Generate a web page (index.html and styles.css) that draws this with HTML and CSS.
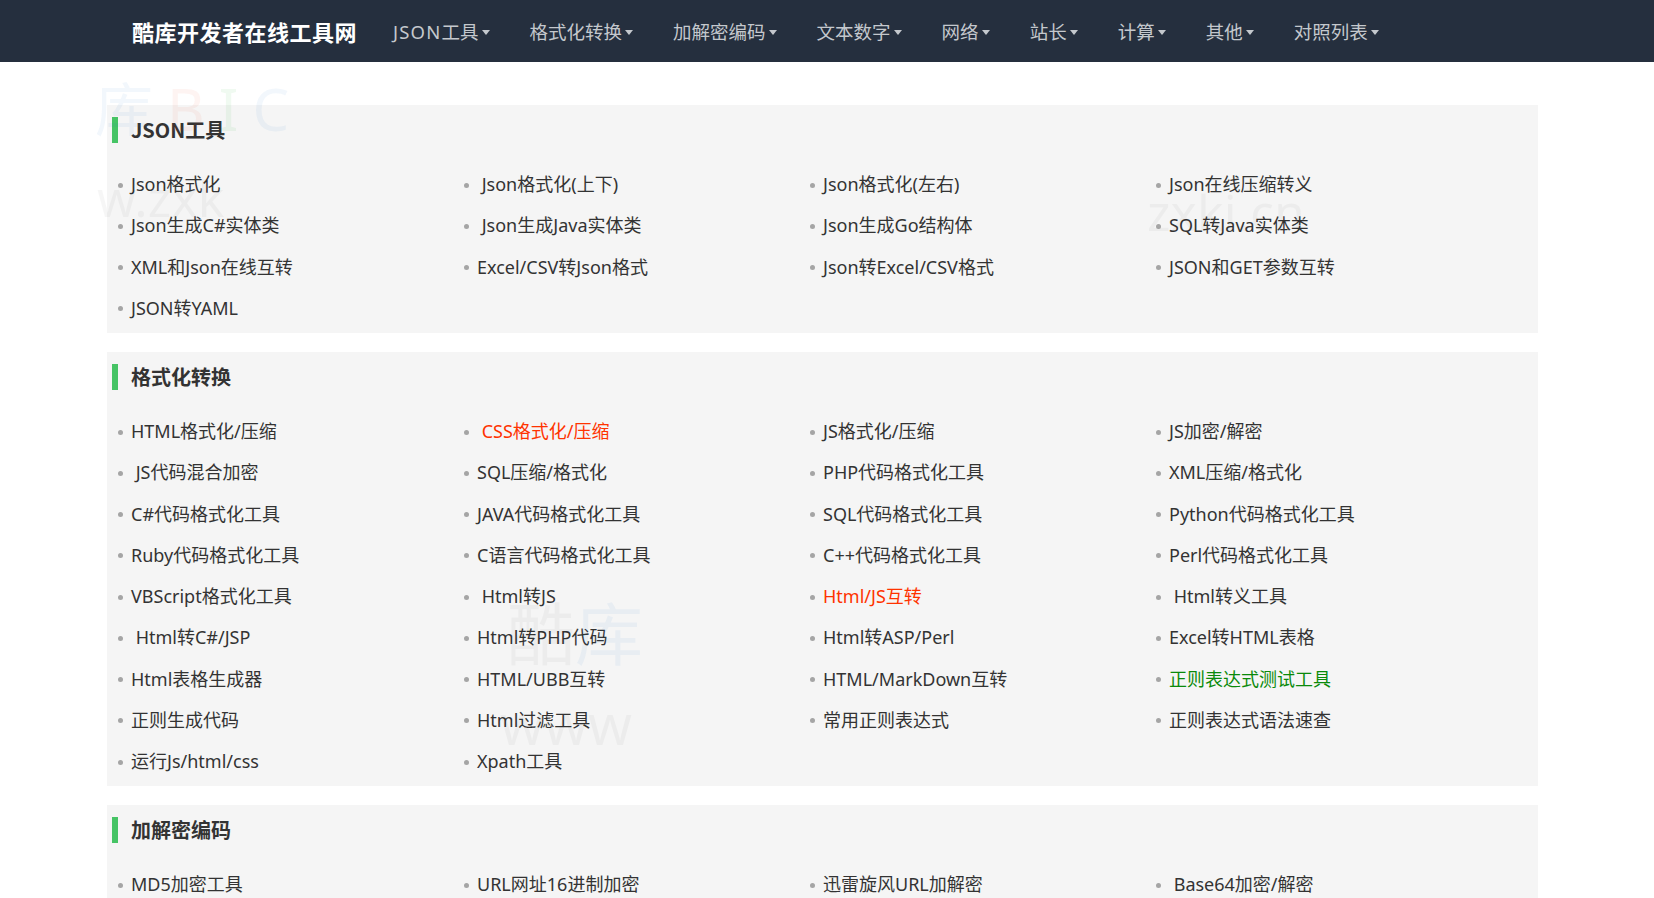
FILE: index.html
```html
<!DOCTYPE html>
<html lang="zh-CN">
<head>
<meta charset="utf-8">
<title>酷库开发者在线工具网</title>
<link rel="stylesheet" href="styles.css">
</head>
<body>
<header class="navbar">
  <div class="nav-inner">
    <a class="brand" href="#">酷库开发者在线工具网</a>
    <ul class="nav-menu">
      <li class="nav-item"><span class="latin">JSON</span>工具<span class="caret"></span></li>
      <li class="nav-item">格式化转换<span class="caret"></span></li>
      <li class="nav-item">加解密编码<span class="caret"></span></li>
      <li class="nav-item">文本数字<span class="caret"></span></li>
      <li class="nav-item">网络<span class="caret"></span></li>
      <li class="nav-item">站长<span class="caret"></span></li>
      <li class="nav-item">计算<span class="caret"></span></li>
      <li class="nav-item">其他<span class="caret"></span></li>
      <li class="nav-item">对照列表<span class="caret"></span></li>
    </ul>
  </div>
</header>

<main class="main">
  <div class="watermark wm-a"><span class="wm-blue">库</span><span class="wm-red">B</span><span class="wm-green">I</span><span class="wm-blue">C</span></div>
  <div class="watermark wm-b">w.zxk</div>
  <div class="watermark wm-c">zxki.cn</div>
  <div class="watermark wm-d">酷<span class="wm-blue">库</span></div>
  <div class="watermark wm-e">www</div>

  <section class="panel">
    <h2 class="panel-title">JSON工具</h2>
    <ul class="tool-list">
      <li>Json格式化</li>
      <li>&nbsp;Json格式化(上下)</li>
      <li>Json格式化(左右)</li>
      <li>Json在线压缩转义</li>
      <li>Json生成C#实体类</li>
      <li>&nbsp;Json生成Java实体类</li>
      <li>Json生成Go结构体</li>
      <li>SQL转Java实体类</li>
      <li>XML和Json在线互转</li>
      <li>Excel/CSV转Json格式</li>
      <li>Json转Excel/CSV格式</li>
      <li>JSON和GET参数互转</li>
      <li>JSON转YAML</li>
    </ul>
  </section>

  <section class="panel">
    <h2 class="panel-title">格式化转换</h2>
    <ul class="tool-list">
      <li>HTML格式化/压缩</li>
      <li class="hot">&nbsp;CSS格式化/压缩</li>
      <li>JS格式化/压缩</li>
      <li>JS加密/解密</li>
      <li>&nbsp;JS代码混合加密</li>
      <li>SQL压缩/格式化</li>
      <li>PHP代码格式化工具</li>
      <li>XML压缩/格式化</li>
      <li>C#代码格式化工具</li>
      <li>JAVA代码格式化工具</li>
      <li>SQL代码格式化工具</li>
      <li>Python代码格式化工具</li>
      <li>Ruby代码格式化工具</li>
      <li>C语言代码格式化工具</li>
      <li>C++代码格式化工具</li>
      <li>Perl代码格式化工具</li>
      <li>VBScript格式化工具</li>
      <li>&nbsp;Html转JS</li>
      <li class="hot">Html/JS互转</li>
      <li>&nbsp;Html转义工具</li>
      <li>&nbsp;Html转C#/JSP</li>
      <li>Html转PHP代码</li>
      <li>Html转ASP/Perl</li>
      <li>Excel转HTML表格</li>
      <li>Html表格生成器</li>
      <li>HTML/UBB互转</li>
      <li>HTML/MarkDown互转</li>
      <li class="new">正则表达式测试工具</li>
      <li>正则生成代码</li>
      <li>Html过滤工具</li>
      <li>常用正则表达式</li>
      <li>正则表达式语法速查</li>
      <li>运行Js/html/css</li>
      <li>Xpath工具</li>
    </ul>
  </section>

  <section class="panel">
    <h2 class="panel-title">加解密编码</h2>
    <ul class="tool-list">
      <li>MD5加密工具</li>
      <li>URL网址16进制加密</li>
      <li>迅雷旋风URL加解密</li>
      <li>&nbsp;Base64加密/解密</li>
      <li>Escape加密/解密</li>
      <li>Unicode编码转换</li>
      <li>UTF-8编码转换</li>
      <li>URL编码/解码</li>
    </ul>
  </section>
</main>
</body>
</html>
```

FILE: styles.css
```css
html, body {
  margin: 0;
  padding: 0;
  overflow: hidden;
  background: #ffffff;
}

body {
  font-family: "Noto Sans", "Noto Sans CJK SC", sans-serif;
  color: #333333;
}

ul {
  list-style: none;
  margin: 0;
  padding: 0;
}

/* ---------- navbar ---------- */
.navbar {
  height: 62px;
  background: #252f3e;
}

.nav-inner {
  height: 100%;
  display: flex;
  align-items: center;
  padding-left: 132px;
}

.brand {
  font-family: "Noto Sans CJK SC", sans-serif;
  font-size: 22px;
  font-weight: 700;
  color: #ffffff;
  text-decoration: none;
  letter-spacing: 0.5px;
  margin-right: 16px;
}

.nav-menu {
  display: flex;
  align-items: center;
}

.nav-item {
  font-family: "Noto Sans", "Noto Sans CJK SC", sans-serif;
  font-size: 18.5px;
  color: #c4c8cd;
  padding: 0 20px;
  display: flex;
  align-items: center;
  white-space: nowrap;
}

.nav-item .latin {
  letter-spacing: 1.2px;
}

.caret {
  display: inline-block;
  width: 0;
  height: 0;
  margin-left: 3px;
  margin-top: 2px;
  border-top: 5px solid #c4c8cd;
  border-left: 4.5px solid transparent;
  border-right: 4.5px solid transparent;
}

/* ---------- main ---------- */
.main {
  position: relative;
  width: 1431px;
  margin: 43px 0 0 107px;
}

.panel {
  position: relative;
  background: #f5f5f5;
  padding: 12px 23px 4px 24px;
  margin-bottom: 19px;
}

.panel-title {
  margin: 0;
  height: 26px;
  line-height: 26px;
  font-family: "Noto Sans CJK SC", sans-serif;
  font-size: 20px;
  font-weight: 700;
  color: #333333;
  display: flex;
  align-items: center;
  gap: 13px;
  margin-left: -19px;
}

.panel-title::before {
  content: "";
  width: 6px;
  height: 26px;
  background: #46c465;
}

.tool-list {
  margin-top: 21px;
  display: grid;
  grid-template-columns: repeat(4, 346px);
}

.tool-list li {
  font-size: 18px;
  line-height: 41.25px;
  height: 41.25px;
  color: #333333;
  white-space: nowrap;
}

.tool-list li::before {
  content: "";
  display: inline-block;
  width: 5px;
  height: 5px;
  border-radius: 50%;
  background: #a5a5a5;
  margin-left: -13px;
  margin-right: 8px;
  vertical-align: middle;
  position: relative;
  top: -1px;
}

.tool-list li.hot {
  color: #ff3300;
}

.tool-list li.new {
  color: #0a8a0a;
}

/* ---------- faint background watermarks ---------- */
.watermark {
  position: absolute;
  z-index: 1;
  pointer-events: none;
  font-family: "Noto Sans", "Noto Sans CJK SC", sans-serif;
  color: rgba(0, 0, 0, 0.035);
  white-space: nowrap;
}

.watermark span { color: inherit; }
.wm-blue { color: rgba(30, 120, 210, 0.06) !important; }
.wm-red { color: rgba(230, 60, 40, 0.06) !important; }
.wm-green { color: rgba(40, 180, 60, 0.07) !important; }

.wm-a {
  left: -12px;
  top: -25px;
  font-size: 58px;
  letter-spacing: 14px;
  line-height: 1;
}

.wm-b {
  left: -10px;
  top: 68px;
  font-size: 50px;
  line-height: 1;
}

.wm-c {
  left: 1040px;
  top: 82px;
  font-size: 50px;
  line-height: 1;
}

.wm-d {
  left: 400px;
  top: 495px;
  font-size: 68px;
  line-height: 1;
}

.wm-e {
  left: 393px;
  top: 590px;
  font-size: 56px;
  line-height: 1;
}
```
